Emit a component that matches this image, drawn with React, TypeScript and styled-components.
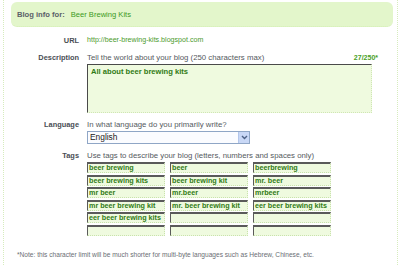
import React from "react";
import styled, { createGlobalStyle } from "styled-components";

const Global = createGlobalStyle`
  html, body {
    margin: 0;
    padding: 0;
    background: #ffffff;
  }
  body {
    font-family: "Liberation Sans", Arial, sans-serif;
    color: #555555;
  }
`;

const Styles = {
  Page: styled.div`
    box-sizing: border-box;
    width: 395px;
    height: 265px;
    margin-left: 3px;
    border-left: 1px dotted #d6ecbd;
    border-right: 1px dotted #d6ecbd;
    overflow: hidden;
  `,

  Header: styled.div`
    box-sizing: border-box;
    height: 25px;
    margin: 2px 4px 0 7px;
    padding-left: 6px;
    display: flex;
    align-items: center;
    gap: 6px;
    border-radius: 6px;
    background-color: #e3f6cb;
    border-bottom: 1px dotted #d3eeb2;
    font-size: 7.6px;

    .label {
      font-weight: bold;
      color: #5a6068;
    }
    .name {
      color: #3c9a1e;
    }
  `,

  Form: styled.div`
    display: flex;
    flex-direction: column;
    font-size: 7.4px;
    line-height: 9px;
  `,

  Field: styled.div<{ top: number }>`
    display: grid;
    grid-template-columns: 75px 1fr;
    column-gap: 8px;
    margin-top: ${(props) => props.top}px;

    .label {
      text-align: right;
      color: #4a4e54;
      font-weight: 600;
    }
  `,

  Value: styled.div`
    color: #4b9a2c;
    font-size: 7.1px;
  `,

  Hint: styled.div<{ wide?: boolean }>`
    display: flex;
    justify-content: space-between;
    width: ${(props) => (props.wide ? "291px" : "auto")};
    color: #555a60;
    font-size: 7.8px;

    .count {
      color: #49a026;
      font-weight: bold;
      font-size: 7px;
    }
  `,

  TextArea: styled.div`
    box-sizing: border-box;
    width: 285px;
    height: 49px;
    margin-top: 2px;
    padding: 2px 3px;
    background-color: #effadf;
    border-top: 1px solid #4a4a4a;
    border-left: 1px solid #4a4a4a;
    border-right: 1px dotted #cfe6b4;
    border-bottom: 1px dotted #cfe6b4;
    color: #2f7a14;
    font-weight: bold;
    font-size: 7.6px;
  `,

  Select: styled.div`
    box-sizing: border-box;
    width: 163px;
    height: 13px;
    margin-top: 2px;
    display: flex;
    align-items: center;
    justify-content: space-between;
    border: 1px solid #8fa6c6;
    background-color: #fbfcff;
    color: #222222;
    font-size: 8.4px;
    padding-left: 2px;

    .arrow {
      box-sizing: border-box;
      width: 11px;
      height: 11px;
      display: flex;
      align-items: center;
      justify-content: center;
      background-color: #c9d8f6;
      border-left: 1px solid #b3c6ea;
    }
  `,

  TagGrid: styled.div`
    display: grid;
    grid-template-columns: repeat(3, 78px);
    grid-auto-rows: 11px;
    column-gap: 5px;
    row-gap: 1.6px;
    margin-top: 2.5px;
  `,

  Tag: styled.div`
    box-sizing: border-box;
    padding-left: 1px;
    background-color: #effadf;
    border-top: 2px solid #5a5a5a;
    border-left: 1px solid #5a5a5a;
    border-right: 1px dotted #c9e2ad;
    border-bottom: 1px dotted #c9e2ad;
    color: #2f7a14;
    font-weight: bold;
    font-size: 7.2px;
    line-height: 8px;
    white-space: nowrap;
    overflow: hidden;
  `,

  Note: styled.div`
    margin: 14px 0 0 13px;
    font-size: 6.6px;
    color: #6a6e74;
  `,
};

const tags = [
  "beer brewing",
  "beer",
  "beerbrewing",
  "beer brewing kits",
  "beer brewing kit",
  "mr. beer",
  "mr beer",
  "mr.beer",
  "mrbeer",
  "mr beer brewing kit",
  "mr. beer brewing kit",
  "eer beer brewing kits",
  "eer beer brewing kits",
  "",
  "",
  "",
  "",
  "",
];

export default function App() {
  return (
    <>
      <Global />
      <Styles.Page>
        <Styles.Header>
          <span className="label">Blog info for:</span>
          <span className="name">Beer Brewing Kits</span>
        </Styles.Header>

        <Styles.Form>
          <Styles.Field top={9}>
            <div className="label">URL</div>
            <Styles.Value>http://beer-brewing-kits.blogspot.com</Styles.Value>
          </Styles.Field>

          <Styles.Field top={8}>
            <div className="label">Description</div>
            <div>
              <Styles.Hint wide>
                <span>Tell the world about your blog (250 characters max)</span>
                <span className="count">27/250*</span>
              </Styles.Hint>
              <Styles.TextArea>All about beer brewing kits</Styles.TextArea>
            </div>
          </Styles.Field>

          <Styles.Field top={6.5}>
            <div className="label">Language</div>
            <div>
              <Styles.Hint>In what language do you primarily write?</Styles.Hint>
              <Styles.Select>
                <span>English</span>
                <span className="arrow">
                  <svg width="7" height="5" viewBox="0 0 7 5">
                    <path
                      d="M1 1 L3.5 3.5 L6 1"
                      fill="none"
                      stroke="#4d6185"
                      strokeWidth="1.4"
                    />
                  </svg>
                </span>
              </Styles.Select>
            </div>
          </Styles.Field>

          <Styles.Field top={7}>
            <div className="label">Tags</div>
            <div>
              <Styles.Hint>
                Use tags to describe your blog (letters, numbers and spaces only)
              </Styles.Hint>
              <Styles.TagGrid>
                {tags.map((tag, index) => (
                  <Styles.Tag key={index}>{tag}</Styles.Tag>
                ))}
              </Styles.TagGrid>
            </div>
          </Styles.Field>

          <Styles.Note>
            *Note: this character limit will be much shorter for multi-byte
            languages such as Hebrew, Chinese, etc.
          </Styles.Note>
        </Styles.Form>
      </Styles.Page>
    </>
  );
}
